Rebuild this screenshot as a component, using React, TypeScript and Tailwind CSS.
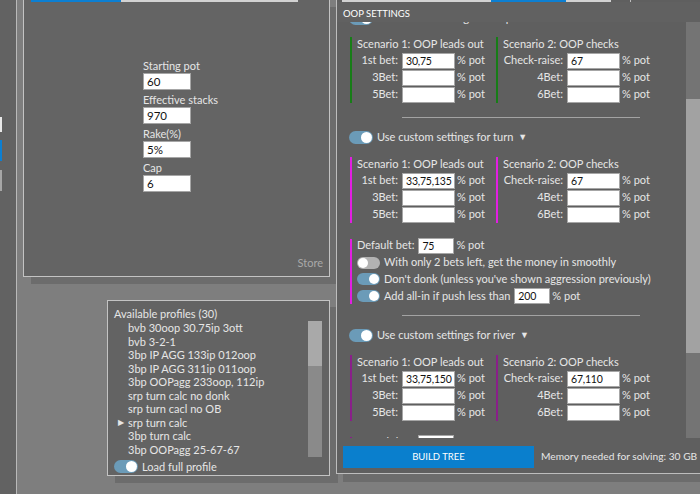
import React from 'react';

const font = "font-['Lato','Noto_Sans',sans-serif]";

const Toggle = ({ on, size = 'md' }: { on: boolean; size?: 'md' | 'sm' }) => (
  <span
    className={`inline-flex shrink-0 items-center rounded-full px-[1px] ${
      size === 'md' ? 'w-[24px] h-[13px]' : 'w-[23px] h-[12px]'
    } ${on ? 'bg-[#6b9bb8] justify-end' : 'bg-[#b2b2b2] justify-start'}`}
  >
    <span className={`rounded-full bg-white ${size === 'md' ? 'w-[11px] h-[11px]' : 'w-[10px] h-[10px]'}`} />
  </span>
);

const Box = ({ value, w = 'w-[53px]' }: { value?: string; w?: string }) => (
  <div className={`${w} h-[16px] shrink-0 bg-white border border-[#a6a6a6] pl-[3px] text-[10.5px] tracking-[-0.2px] leading-[14px] text-[#111] whitespace-nowrap overflow-hidden`}>
    {value}
  </div>
);

const Scenario = ({
  bar,
  title,
  labels,
  values,
  labelW,
  width,
}: {
  bar: string;
  title: string;
  labels: string[];
  values: string[];
  labelW: string;
  width: string;
}) => (
  <div className={`flex ${width}`}>
    <div className={`w-[2px] ${bar}`} />
    <div className="pl-[5px] flex flex-col">
      <div className="h-[15px] leading-[14px] whitespace-nowrap">{title}</div>
      {labels.map((l, i) => (
        <div key={l} className="flex items-center h-[17px]">
          <span className={`${labelW} flex justify-end whitespace-nowrap`}>{l}</span>
          <span className="ml-[4px]">
            <Box value={values[i]} />
          </span>
          <span className="ml-[2px] whitespace-nowrap">% pot</span>
        </div>
      ))}
    </div>
  </div>
);

const Street = ({ bar, v1, v2 }: { bar: string; v1: string; v2: string }) => (
  <div className="flex">
    <Scenario
      bar={bar}
      width="w-[146px]"
      title="Scenario 1: OOP leads out"
      labels={['1st bet:', '3Bet:', '5Bet:']}
      values={[v1, '', '']}
      labelW="w-[41px]"
    />
    <Scenario
      bar={bar}
      width="w-[160px]"
      title="Scenario 2: OOP checks"
      labels={['Check-raise:', '4Bet:', '6Bet:']}
      values={[v2, '', '']}
      labelW="w-[60px]"
    />
  </div>
);

const StreetToggle = ({ label }: { label: string }) => (
  <div className="flex items-center h-[14px] -ml-[1px] whitespace-nowrap">
    <Toggle on />
    <span className="ml-[4px]">{label}</span>
    <span className="ml-[5px] text-[9px]">▼</span>
  </div>
);

const Separator = () => <div className="ml-[52px] w-[238px] h-px bg-[#a3a3a3]" />;

const profiles = [
  'bvb 30oop 30.75ip 3ott',
  'bvb 3-2-1',
  '3bp IP AGG 133ip 012oop',
  '3bp IP AGG 311ip 011oop',
  '3bp OOPagg 233oop, 112ip',
  'srp turn calc no donk',
  'srp turn cacl no OB',
  'srp turn calc',
  '3bp turn calc',
  '3bp OOPagg 25-67-67',
];

export default function App() {
  return (
    <div className={`flex w-[700px] h-[494px] overflow-hidden bg-[#7e7e7e] text-[11px] text-[#e6e6e6] ${font}`}>
      {/* left strip */}
      <div className="w-[17px] shrink-0 bg-[#626262] border-r border-[#b9b9b9] flex flex-col">
        <div className="mt-[117px] w-[2px] h-[15px] bg-[#e8e8e8]" />
        <div className="mt-[8px] w-[2px] h-[21px] bg-[#0c7fd2]" />
        <div className="mt-[9px] w-[2px] h-[21px] bg-[#a6a6a6]" />
      </div>

      {/* left column */}
      <div className="w-[319px] shrink-0 flex flex-col">
        <div className="ml-[6px] w-[307px] h-[277px] bg-[#646464] border border-t-0 border-[#c3c3c3] shadow-[8px_7px_0_#6c6c6c] flex flex-col">
          <div className="flex ml-[7px]">
            <div className="w-[90px] h-[2px] bg-[#0c7fd2]" />
            <div className="w-[177px] h-[2px] bg-[#d2d2d2]" />
          </div>
          <div className="ml-[119px] mt-[57px] flex flex-col">
            {[
              ['Starting pot', '60'],
              ['Effective stacks', '970'],
              ['Rake(%)', '5%'],
              ['Cap', '6'],
            ].map(([l, v], i) => (
              <div key={l} className={i ? 'mt-[3px]' : ''}>
                <div className="h-[14px] leading-[14px]">{l}</div>
                <div className="w-[48px] h-[17px] bg-white border border-[#a6a6a6] px-[3px] text-[11.5px] leading-[15px] text-[#111]">
                  {v}
                </div>
              </div>
            ))}
          </div>
          <div className="mt-auto self-end mr-[6px] mb-[5px] text-[#a9a9a9]">Store</div>
        </div>

        <div className="ml-[90px] mt-[23px] w-[223px] h-[176px] bg-[#636363] border border-[#c3c3c3] shadow-[8px_7px_0_#6c6c6c] flex flex-col">
          <div className="ml-[6px] mt-[6px] h-[14px] leading-[14px]">Available profiles (30)</div>
          <div className="flex h-[136px] ml-[6px]">
            <div className="flex-1 flex flex-col">
              {profiles.map((p) => (
                <div key={p} className="flex items-center h-[13.5px] leading-[13.5px]">
                  <span className="w-[14px] text-[8px] pl-[4px]">{p === 'srp turn calc' ? '▶' : ''}</span>
                  <span>{p}</span>
                </div>
              ))}
            </div>
            <div className="w-[14px] mr-[7px] bg-[#8a8a8a]">
              <div className="h-[45px] bg-[#a9a9a9]" />
            </div>
          </div>
          <div className="ml-[6px] mt-[2px] flex items-center">
            <Toggle on />
            <span className="ml-[4px]">Load full profile</span>
          </div>
        </div>
      </div>

      {/* right panel */}
      <div className="w-[364px] shrink-0 h-[474px] bg-[#5f5f5f] border-l border-b border-[#bdbdbd] shadow-[7px_8px_0_#6c6c6c] flex flex-col">
        <div className="flex items-start ml-[5px] h-[2px] overflow-visible">
          <div className="w-[149px] h-[2px] bg-[#d2d2d2]" />
          <div className="w-[75px] h-[2px] bg-[#0c7fd2]" />
          <div className="w-[45px] h-[2px] bg-[#d2d2d2]" />
          <div className="ml-[19px] w-px h-[5px] bg-[#bdbdbd]" />
        </div>
        <div className="h-[20px] pl-[6px] pt-[6px] text-[9.5px] leading-[12px] text-white bg-[#616161] relative z-10">
          OOP SETTINGS
        </div>
        <div className="h-[416px] flex">
          <div className="flex-1 overflow-hidden pl-[13px] flex flex-col">
            <div className="-mt-[11px]">
              <StreetToggle label="Use custom settings for flop" />
            </div>
            <div className="mt-[12px]">
              <Street bar="bg-[#177d17]" v1="30,75" v2="67" />
            </div>
            <div className="mt-[14px]">
              <Separator />
            </div>
            <div className="mt-[12px]">
              <StreetToggle label="Use custom settings for turn" />
            </div>
            <div className="mt-[13px]">
              <Street bar="bg-[#e21ee2]" v1="33,75,135" v2="67" />
            </div>
            <div className="mt-[14px] flex">
              <div className="w-[2px] mt-[2px] bg-[#e21ee2]" />
              <div className="pl-[5px] flex flex-col whitespace-nowrap">
                <div className="flex items-center h-[17px]">
                  <span>Default bet:</span>
                  <span className="ml-[4px]">
                    <Box value="75" w="w-[36px]" />
                  </span>
                  <span className="ml-[2px]">% pot</span>
                </div>
                <div className="flex items-center h-[17px]">
                  <Toggle on={false} size="sm" />
                  <span className="ml-[4px]">With only 2 bets left, get the money in smoothly</span>
                </div>
                <div className="flex items-center h-[16.5px]">
                  <Toggle on size="sm" />
                  <span className="ml-[4px]">Don't donk (unless you've shown aggression previously)</span>
                </div>
                <div className="flex items-center h-[16.5px]">
                  <Toggle on size="sm" />
                  <span className="ml-[4px]">Add all-in if push less than</span>
                  <span className="ml-[4px]">
                    <Box value="200" w="w-[36px]" />
                  </span>
                  <span className="ml-[2px]">% pot</span>
                </div>
              </div>
            </div>
            <div className="mt-[11px]">
              <Separator />
            </div>
            <div className="mt-[12px]">
              <StreetToggle label="Use custom settings for river" />
            </div>
            <div className="mt-[13px]">
              <Street bar="bg-[#8a1f8a]" v1="33,75,150" v2="67,110" />
            </div>
            <div className="mt-[13px] flex shrink-0">
              <div className="w-[2px] mt-[3px] bg-[#8a1f8a]" />
              <div className="pl-[5px] flex items-center h-[17px]">
                <span>Default bet:</span>
                <span className="ml-[4px]">
                  <Box value="75" w="w-[36px]" />
                </span>
                <span className="ml-[2px]">% pot</span>
              </div>
            </div>
          </div>
          <div className="w-[14px] h-[416px] bg-[#747474] flex flex-col">
            <div className="mt-[77px] h-[254px] bg-[#a2a2a2]" />
          </div>
        </div>
        <div className="flex items-center mt-[8px]">
          <div className="ml-[6px] w-[191px] shrink-0 h-[22px] bg-[#0a7fcd] flex items-center justify-center text-[9.5px] text-white">
            BUILD TREE
          </div>
          <span className="ml-[7px] whitespace-nowrap text-[10.2px]">Memory needed for solving: 30 GB</span>
        </div>
      </div>
    </div>
  );
}
